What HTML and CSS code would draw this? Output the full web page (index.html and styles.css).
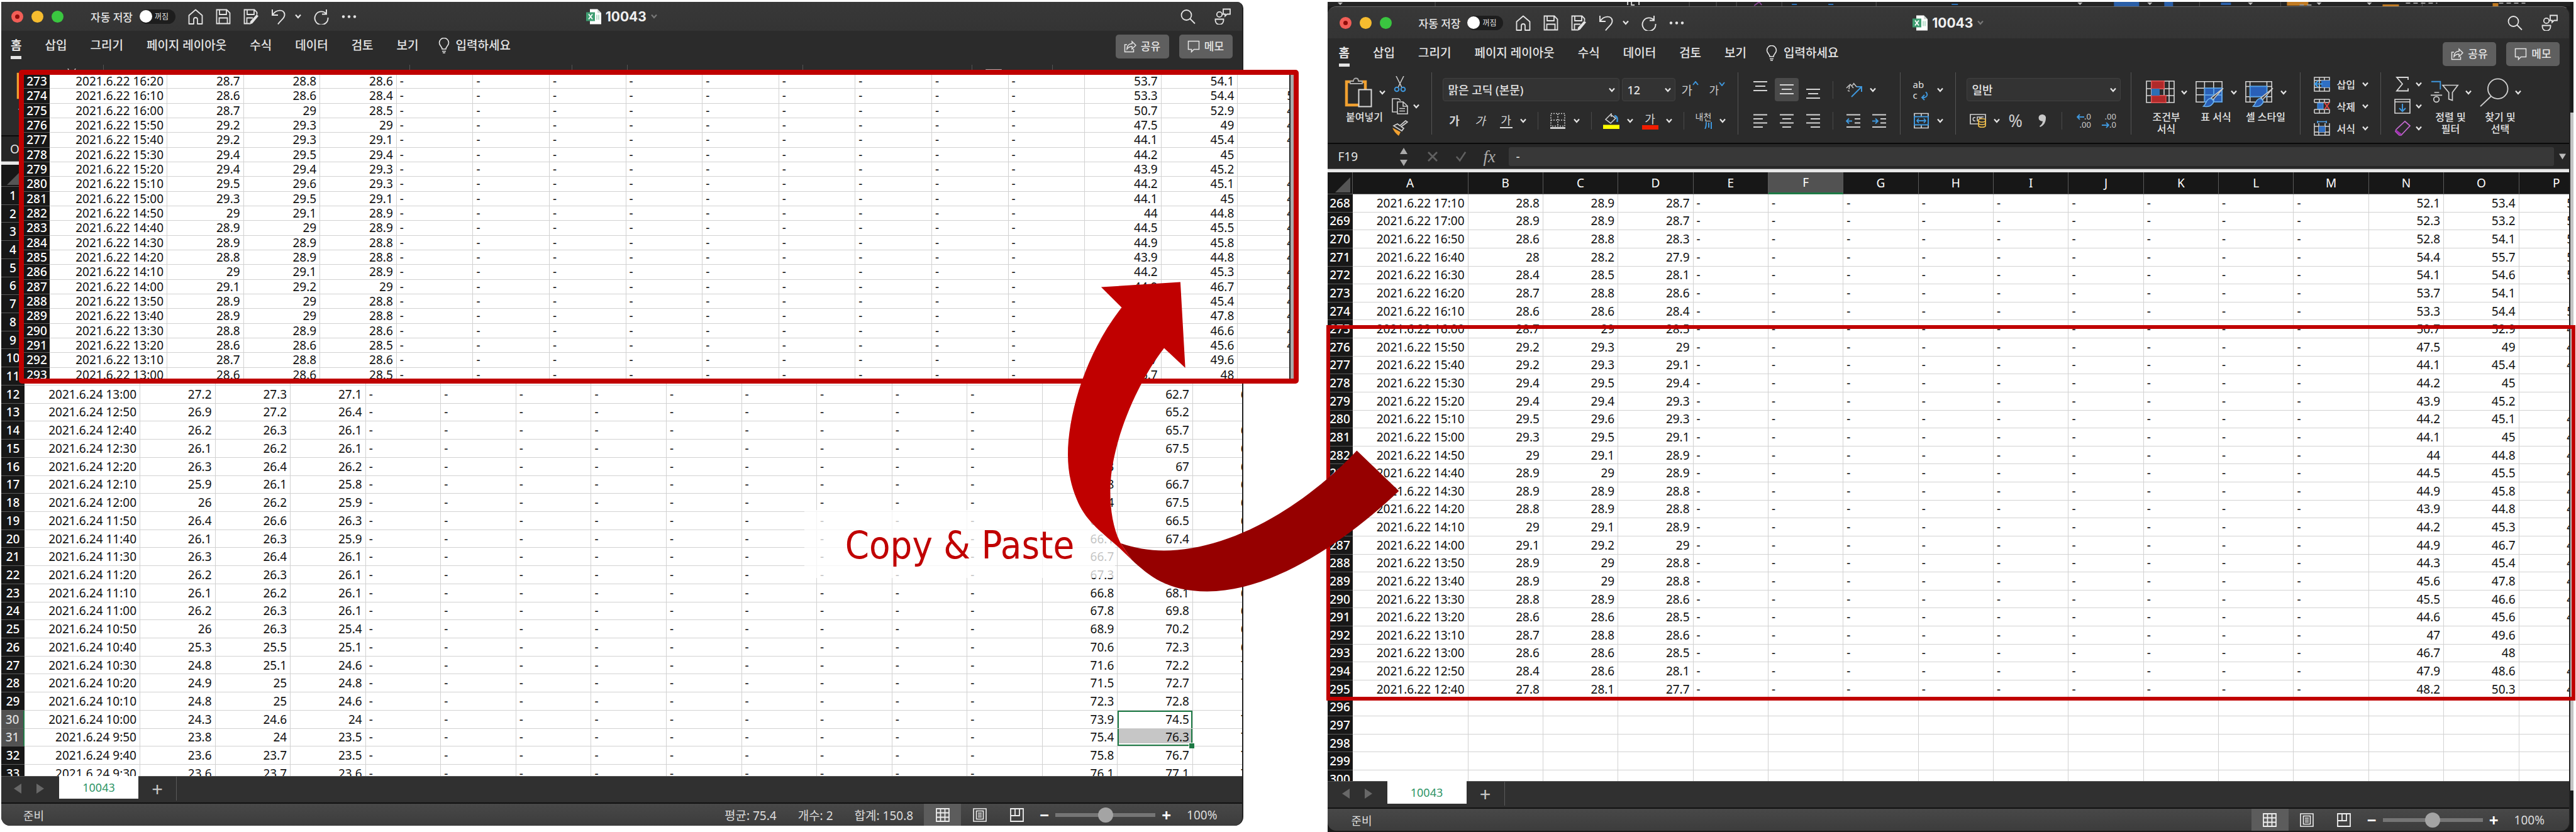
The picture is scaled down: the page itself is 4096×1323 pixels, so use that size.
FILE: index.html
```html
<!DOCTYPE html>
<html lang="ko">
<head>
<meta charset="utf-8">
<title>10043</title>
<link rel="stylesheet" href="styles.css">
</head>
<body>
<svg class="sprite" aria-hidden="true">
  <symbol id="chev" viewBox="0 0 10 8"><path d="M1 1.5l4 4.5 4-4.5" fill="none" stroke="currentColor" stroke-width="2.2"/></symbol>
  <symbol id="home" viewBox="0 0 24 25"><path d="M1.5 10.5L12 1.5l10.500 9V24H15v-7a3 3 0 0 0-6 0v7H1.500z" fill="none" stroke="currentColor" stroke-width="1.8" stroke-linejoin="round"/></symbol>
  <symbol id="save" viewBox="0 0 24 25"><path d="M1.500 1.500h16l5 5V23.500h-21zM6 1.500V9h11V1.500M5.500 23.500V14.500h13v9" fill="none" stroke="currentColor" stroke-width="1.8"/></symbol>
  <symbol id="saveas" viewBox="0 0 24 25"><path d="M10 23.500H1.500v-22h16l4 4V9M6 1.500V9h11V1.500M5.500 23.500V14.500H15" fill="none" stroke="currentColor" stroke-width="1.8"/><path d="M21 9l3 2.500L14.500 23l-4.500 2 1-5z" fill="currentColor"/></symbol>
  <symbol id="undo" viewBox="0 0 24 25"><path d="M2 1v9h9M2.500 9.500C8 1 20 0 21.500 8.500 22.500 15 15 18 11 24.500" fill="none" stroke="currentColor" stroke-width="1.9"/></symbol>
  <symbol id="redo" viewBox="0 0 24 25"><path d="M20 1v7.500h-7M20 8A10.500 10.500 0 1 0 22.500 14" fill="none" stroke="currentColor" stroke-width="1.9"/></symbol>
  <symbol id="dots" viewBox="0 0 24 6"><g fill="currentColor"><circle cx="3" cy="3" r="2.200"/><circle cx="12" cy="3" r="2.200"/><circle cx="21" cy="3" r="2.200"/></g></symbol>
  <symbol id="doc" viewBox="0 0 24 24"><path d="M6 0h12l6 6v18H6z" fill="#fff"/><path d="M18 0v6h6z" fill="#cfd8d3"/><rect y="5" width="14" height="14" fill="#3f9e72"/><path d="M4 8l6 8M10 8l-6 8" stroke="#fff" stroke-width="1.800"/><path d="M17 9v8M20 9v8" stroke="#9fd3ba" stroke-width="1.500"/></symbol>
  <symbol id="search" viewBox="0 0 24 24"><g fill="none" stroke="currentColor" stroke-width="1.800"><circle cx="9.500" cy="9.500" r="8"/><path d="M15 15l8 8"/></g></symbol>
  <symbol id="person" viewBox="0 0 26 26"><g fill="none" stroke="currentColor" stroke-width="1.800"><circle cx="8" cy="10" r="4.200"/><path d="M1.500 17.500h13v2a5.500 5.500 0 0 1-13 0zM14 1.500h11v8h-5l-3 3v-3h-3z"/></g></symbol>
  <symbol id="bulb" viewBox="0 0 18 25"><path d="M6 18c0-4-4.500-5-4.500-10a7.500 7.500 0 0 1 15 0c0 5-4.500 6-4.500 10zM6 21.500h6M7 24h4" fill="none" stroke="currentColor" stroke-width="1.600"/></symbol>
  <symbol id="share" viewBox="0 0 20 20"><path d="M5 7H1.500v11.500h14V14M5 14c0-6 4-8.500 8-8.500V2l6 6-6 6v-4c-4 0-6 1-8 4z" fill="none" stroke="currentColor" stroke-width="1.500"/></symbol>
  <symbol id="memo" viewBox="0 0 20 20"><path d="M1.500 1.500h17v13h-8l-4 4v-4h-5z" fill="none" stroke="currentColor" stroke-width="1.500"/></symbol>
  <symbol id="paste" viewBox="0 0 44 48"><path d="M3 7h30v37H3z" fill="none" stroke="#f0a030" stroke-width="4.500"/><path d="M9 10V6h5c0-6 8-6 8 0h6v4z" fill="#2b2b2b" stroke="#aaa" stroke-width="1.800"/><path d="M22.500 19.500h20v27h-20z" fill="#2b2b2b" stroke="#d8d8d8" stroke-width="2"/></symbol>
  <symbol id="cut" viewBox="0 0 26 26"><path d="M7 0l9 18M19 0l-9 18" stroke="#c8c8c8" stroke-width="1.600"/><g fill="none" stroke="#3f97dc" stroke-width="2"><circle cx="8" cy="21" r="3.300"/><circle cx="18" cy="21" r="3.300"/></g></symbol>
  <symbol id="copy" viewBox="0 0 26 26"><g fill="none" stroke="#d0d0d0" stroke-width="1.600"><path d="M9 22H1V1h10l3 3"/><path d="M9 6h9l7 6.500V25H9zM18 6v7h7M12 16.500h9M12 20.500h9"/></g></symbol>
  <symbol id="brush" viewBox="0 0 26 26"><path d="M1 12l13 7-3 6C6 21 3 17 1 12z" fill="#f0a030"/><path d="M3 9l13 8 3-4-4-2.500L25 3l-3-2-9 8-4-3z" fill="#2b2b2b" stroke="#d0d0d0" stroke-width="1.700"/></symbol>
  <symbol id="borders" viewBox="0 0 26 26"><path d="M2 1.500h22v20H2zM13 2v20M2 12h22" fill="none" stroke="#ccc" stroke-width="1.600" stroke-dasharray="2 2"/><path d="M1 24.500h24" stroke="#eee" stroke-width="2.400"/></symbol>
  <symbol id="fill" viewBox="0 0 26 26"><path d="M13 1v6M12 3L4 11l8 6 8-8z" fill="none" stroke="#ccc" stroke-width="1.600"/><path d="M18 5c5 1 5 5 4.500 10" fill="none" stroke="#3f97dc" stroke-width="2.500"/><path d="M0 19.500h26V26H0z" fill="#ff0"/></symbol>
  <symbol id="al-top" viewBox="0 0 24 38"><path d="M1 6h22M4 13h16M1 20h22" stroke="currentColor" stroke-width="1.800"/></symbol>
  <symbol id="al-mid" viewBox="0 0 24 38"><path d="M1 11h22M4 18h16M1 25h22" stroke="currentColor" stroke-width="1.800"/></symbol>
  <symbol id="al-bot" viewBox="0 0 24 38"><path d="M1 18h22M4 25h16M1 32h22" stroke="currentColor" stroke-width="1.800"/></symbol>
  <symbol id="al-l" viewBox="0 0 24 24"><path d="M1 2h22M1 8.500h15M1 15h22M1 21.500h15" stroke="currentColor" stroke-width="1.800"/></symbol>
  <symbol id="al-c" viewBox="0 0 24 24"><path d="M1 2h22M5 8.500h14M1 15h22M5 21.500h14" stroke="currentColor" stroke-width="1.800"/></symbol>
  <symbol id="al-r" viewBox="0 0 24 24"><path d="M1 2h22M8 8.500h15M1 15h22M8 21.500h15" stroke="currentColor" stroke-width="1.800"/></symbol>
  <symbol id="outdent" viewBox="0 0 24 24"><path d="M1 2h22M14 8.500h9M14 15h9M1 21.500h22" stroke="#d0d0d0" stroke-width="1.800"/><path d="M10 12H1M5 8l-4 4 4 4" fill="none" stroke="#3f97dc" stroke-width="1.900"/></symbol>
  <symbol id="indent" viewBox="0 0 24 24"><path d="M1 2h22M14 8.500h9M14 15h9M1 21.500h22" stroke="#d0d0d0" stroke-width="1.800"/><path d="M1 12h9M6 8l4 4-4 4" fill="none" stroke="#3f97dc" stroke-width="1.900"/></symbol>
  <symbol id="orient" viewBox="0 0 26 24"><path d="M9 23L24 8M17 7h8v8" fill="none" stroke="#3f97dc" stroke-width="2"/><path d="M1 9l5-5-1 7M7 3l5 6M12 1l5 6M10 5l3-3M3 13l3 1" fill="none" stroke="#c8c8c8" stroke-width="1.500"/></symbol>
  <symbol id="wraparrow" viewBox="0 0 12 14"><path d="M8 0c5 5 1 10-6 9M6 5L2 9l4 4" fill="none" stroke="#3f97dc" stroke-width="1.900"/></symbol>
  <symbol id="merge" viewBox="0 0 26 26"><path d="M2 1.500h22v23H2zM13 1v5M13 20v5" fill="none" stroke="#d0d0d0" stroke-width="1.700"/><path d="M2 6.500h22v13H2z" fill="#2b2b2b" stroke="#3f97dc" stroke-width="2"/><path d="M6 13h14M9 9.500L6 13l3 3.500M17 9.500l3 3.500-3 3.500" fill="none" stroke="#3f97dc" stroke-width="1.800"/></symbol>
  <symbol id="money" viewBox="0 0 26 22"><path d="M1 1h24v15H1z" fill="none" stroke="#d0d0d0" stroke-width="1.700"/><path d="M9 6c-5-2-5 7 0 5M12 12V5h4v7M18 12V5h4" fill="none" stroke="#d0d0d0" stroke-width="1.600"/><path d="M14 10c0-3 11-3 11 0v9c0 3-11 3-11 0z" fill="#2b2b2b" stroke="#f2c04c" stroke-width="1.700"/><path d="M14 11c1 3 10 3 11 0M14 15c1 3 10 3 11 0" fill="none" stroke="#f2c04c" stroke-width="1.600"/></symbol>
  <symbol id="thousands" viewBox="0 0 14 22"><path d="M7 1a5.500 5.500 0 0 1 6 6c0 7-4 12-9 14l-1-1.500c3-2 5-5 5-8A5.200 5.200 0 0 1 1.500 6.500 5.500 5.500 0 0 1 7 1z" fill="#c8c8c8"/></symbol>
  <symbol id="arr-l" viewBox="0 0 12 10"><path d="M12 5H1M5 1L1 5l4 4" fill="none" stroke="#3f97dc" stroke-width="1.900"/></symbol>
  <symbol id="arr-r" viewBox="0 0 12 10"><path d="M0 5h11M7 1l4 4-4 4" fill="none" stroke="#3f97dc" stroke-width="1.900"/></symbol>
  <symbol id="cond" viewBox="0 0 46 48"><path d="M1 6h44v34H1zM9 6v34M29 6v34M37 6v34M1 18h44M1 29h44" fill="none" stroke="#d8d8d8" stroke-width="1.600"/><path d="M9 6h20v12H9zM9 29h23v11H9z" fill="#b02a2a" stroke="#e04444" stroke-width="1.500"/><path d="M9 18h13v11H9z" fill="#2a6fb5"/></symbol>
  <symbol id="tfmt" viewBox="0 0 48 48"><path d="M15 17h30v23H15z" fill="#2960b8"/><path d="M1 6h43v34H1zM15 6v34M30 6v34M1 17h43M1 28h43" fill="none" stroke="#d8d8d8" stroke-width="1.600"/><path d="M15 17h29v23H15zM30 17v23M15 28h29" fill="none" stroke="#4ea0ea" stroke-width="1.500"/><path d="M46 17L29 36l-3-3z" fill="#333" stroke="#ccc" stroke-width="1.600"/><path d="M24 34c5 1 8 5 4 9-3 4-9 5-15 4 5-4 4-11 11-13z" fill="#2960b8" stroke="#6cb4f0" stroke-width="1.600"/></symbol>
  <symbol id="cstyle" viewBox="0 0 48 48"><path d="M1 6h43v34H1zM8 6v34M1 14h43M1 31h43M36 6v34" fill="none" stroke="#d8d8d8" stroke-width="1.600"/><path d="M8 14h28v17H8z" fill="#2960b8" stroke="#4ea0ea" stroke-width="1.800"/><path d="M46 17L29 36l-3-3z" fill="#333" stroke="#ccc" stroke-width="1.600"/><path d="M24 34c5 1 8 5 4 9-3 4-9 5-15 4 5-4 4-11 11-13z" fill="#2960b8" stroke="#6cb4f0" stroke-width="1.600"/></symbol>
  <symbol id="ins" viewBox="0 0 26 24"><path d="M1 1h24v22H1zM9 1v22M17 1v22M1 6h24M1 17h24" fill="none" stroke="#d8d8d8" stroke-width="1.500"/><path d="M12 6h14v11H12z" fill="#2f6fc4"/><path d="M14 11.500H2M7 6.500l-5 5 5 5" fill="none" stroke="#3fa0ee" stroke-width="2.200"/></symbol>
  <symbol id="del" viewBox="0 0 26 24"><path d="M1 1h24M1 23h24M1 1v5M1 17v6M9 1v5M9 17v6M17 1v5M17 17v6M25 1v5M25 17v6M1 6h24M1 17h24" fill="none" stroke="#d8d8d8" stroke-width="1.500"/><path d="M6 7h9v9H6z" fill="#2f6fc4" stroke="#4ea0ea"/><path d="M17 6l8 11M25 6l-8 11" stroke="#e04444" stroke-width="2"/></symbol>
  <symbol id="fmt" viewBox="0 0 26 24"><path d="M1 4v19h24V4M8 4v19M18 4v19M1 9h24M1 18h24" fill="none" stroke="#d8d8d8" stroke-width="1.500"/><path d="M8 9h10v9H8z" fill="#2f6fc4"/><path d="M6 1.500h14M6 0v4M20 0v4" stroke="#4ea0ea" stroke-width="1.700"/></symbol>
  <symbol id="sum" viewBox="0 0 26 24"><path d="M22 5V1H4l9 10.500L4 22.500h18v-4" fill="none" stroke="#d8d8d8" stroke-width="1.800"/></symbol>
  <symbol id="down" viewBox="0 0 26 24"><path d="M1 1h24v22H1zM1 5h24" fill="none" stroke="#d8d8d8" stroke-width="1.600"/><path d="M13 8v12M8 15l5 5 5-5" fill="none" stroke="#3f97dc" stroke-width="2"/></symbol>
  <symbol id="erase" viewBox="0 0 26 24"><path d="M3 14L17 1l8 7-14 15H8l-6-6z" fill="none" stroke="#c46ad0" stroke-width="1.700"/><path d="M3 14l9 7-2 2H8l-6-6z" fill="#a030b0"/></symbol>
  <symbol id="sort" viewBox="0 0 48 48"><path d="M2 6h15v13" fill="none" stroke="#3f97dc" stroke-width="2"/><path d="M21 12h25L37 24v13l-6-2V24z" fill="none" stroke="#d0d0d0" stroke-width="1.800"/><path d="M7 24h8M1 28.500h19" stroke="#d0d0d0" stroke-width="1.800"/><circle cx="10.500" cy="35.500" r="4.500" fill="none" stroke="#d0d0d0" stroke-width="1.800"/></symbol>
  <symbol id="find" viewBox="0 0 48 48"><g fill="none" stroke="#d0d0d0" stroke-width="1.900"><circle cx="30" cy="18" r="16.500"/><path d="M19 30L1 47"/></g></symbol>
  <symbol id="v-grid" viewBox="0 0 22 22"><path d="M1 1h20v20H1zM7.500 1v20M14.500 1v20M1 7.500h20M1 14.500h20" fill="none" stroke="currentColor" stroke-width="1.800"/></symbol>
  <symbol id="v-page" viewBox="0 0 22 22"><path d="M1 1h20v20H1zM5.500 4.500h11v13h-11zM8 8h6M8 11h6M8 14h6" fill="none" stroke="currentColor" stroke-width="1.600"/></symbol>
  <symbol id="v-break" viewBox="0 0 22 22"><path d="M1 1h20v20H1zM8 1v11h7V1M1 12h7" fill="none" stroke="currentColor" stroke-width="1.800"/></symbol>
  <symbol id="tri-u" viewBox="0 0 12 10"><path d="M6 0l6 10H0z" fill="currentColor"/></symbol>
  <symbol id="tri-d" viewBox="0 0 12 10"><path d="M0 0h12L6 10z" fill="currentColor"/></symbol>
  <symbol id="tri-l" viewBox="0 0 12 16"><path d="M12 0v16L0 8z" fill="currentColor"/></symbol>
  <symbol id="tri-r" viewBox="0 0 12 16"><path d="M0 0v16l12-8z" fill="currentColor"/></symbol>
  <symbol id="corner" viewBox="0 0 24 24"><path d="M24 0v24H0z" fill="#555"/></symbol>
  <symbol id="no" viewBox="0 0 18 18"><path d="M2 2l14 14M16 2L2 16" stroke="currentColor" stroke-width="2.800"/></symbol>
  <symbol id="ok" viewBox="0 0 20 18"><path d="M2 9l6 7L18 1" fill="none" stroke="currentColor" stroke-width="2.800"/></symbol>
</svg>

<main class="board">
  <section class="window window-left" aria-label="10043">
    <header class="titlebar">
      <div class="tools">
        <span class="lights"><i class="red"></i><i class="amber"></i><i class="green"></i></span>
        <span class="autosave">자동 저장</span>
        <button class="switch" role="switch" aria-checked="false" aria-label="자동 저장"><i></i>꺼짐</button>
        <button aria-label="홈"><svg class="i24"><use href="#home"/></svg></button>
        <button aria-label="저장"><svg class="i24"><use href="#save"/></svg></button>
        <button aria-label="다른 이름으로 저장"><svg class="i24"><use href="#saveas"/></svg></button>
        <button class="split" aria-label="실행 취소"><svg class="i24"><use href="#undo"/></svg><svg class="chev"><use href="#chev"/></svg></button>
        <button aria-label="다시 실행"><svg class="i24"><use href="#redo"/></svg></button>
        <button aria-label="더 보기"><svg class="i24"><use href="#dots"/></svg></button>
      </div>
      <h1 class="doc"><svg class="i24"><use href="#doc"/></svg>10043<svg class="chev dim"><use href="#chev"/></svg></h1>
      <div class="corner-tools">
        <button aria-label="검색"><svg class="i24"><use href="#search"/></svg></button>
        <button aria-label="계정"><svg class="i26"><use href="#person"/></svg></button>
      </div>
    </header>
    <nav class="tabs">
      <a href="#" class="on">홈</a><a href="#">삽입</a><a href="#">그리기</a><a href="#">페이지 레이아웃</a><a href="#">수식</a><a href="#">데이터</a><a href="#">검토</a><a href="#">보기</a><a href="#" class="tell"><svg class="bulb"><use href="#bulb"/></svg>입력하세요</a>
      <span class="actions">
        <button class="pill"><svg class="i20"><use href="#share"/></svg>공유</button>
        <button class="pill"><svg class="i20"><use href="#memo"/></svg>메모</button>
      </span>
    </nav>
    <div class="ribbon">
      <div class="group g-clip">
        <button class="big"><span class="split"><svg class="i48"><use href="#paste"/></svg><svg class="chev"><use href="#chev"/></svg></span>붙여넣기</button>
        <div class="stack">
          <button aria-label="잘라내기"><svg class="i26"><use href="#cut"/></svg></button>
          <button aria-label="복사"><svg class="i26"><use href="#copy"/></svg></button>
          <button aria-label="서식 복사"><svg class="i26"><use href="#brush"/></svg></button>
        </div>
      </div>
      <div class="group g-font"></div><div class="group g-align"></div><div class="group g-wrap"></div><div class="group g-number"></div><div class="group g-styles"></div>
      <div class="group g-cells"><svg class="i26"><use href="#ins"/></svg></div>
      <div class="group g-edit"><svg class="i26"><use href="#sum"/></svg></div>
    </div>
    <div class="formula">
      <input class="name" aria-label="이름 상자" value="O30">
      <input class="fx-input" aria-label="수식 입력줄" value="74.5">
    </div>
    <div class="sheet"><table class="grid" id="sheet-top"></table></div>
    <div class="sheettabs">
      <button aria-label="이전 시트"><svg class="arrow"><use href="#tri-l"/></svg></button>
      <button aria-label="다음 시트"><svg class="arrow"><use href="#tri-r"/></svg></button>
      <a href="#" class="sheettab">10043</a>
      <button class="add" aria-label="시트 추가">+</button>
    </div>
    <footer class="status">
      <span class="ready">준비</span>
      <span class="stats"><span>평균: 75.4</span><span>개수: 2</span><span>합계: 150.8</span></span>
      <span class="views">
        <button class="on" aria-label="기본"><svg class="i22"><use href="#v-grid"/></svg></button>
        <button aria-label="페이지 레이아웃"><svg class="i22"><use href="#v-page"/></svg></button>
        <button aria-label="페이지 나누기"><svg class="i22"><use href="#v-break"/></svg></button>
      </span>
      <button class="zoom-btn" aria-label="축소">−</button>
      <input type="range" aria-label="확대/축소" min="0" max="200" value="100">
      <button class="zoom-btn" aria-label="확대">+</button>
      <span class="percent">100%</span>
    </footer>
  </section>

  <div class="behind">
    <svg class="sliver" viewBox="0 0 1976 7" preserveAspectRatio="none" aria-hidden="true">
      <path d="M171 0v7M575 0v7M618 0v7M650 0v7M722 0v7M872 0v7M1270 0v7M1386 0v7M1515 0v7M1740 0v7" stroke="#555" stroke-width="1"/>
      <path d="M16 1h8l-4 4zM1192 1h8l-4 4zM1303 1h8l-4 4zM1463 1h8l-4 4zM1572 1h8l-4 4zM1652 1h8l-4 4z" fill="#bbb"/>
      <path d="M477 0v5M483 0v5h5M495 0v5" stroke="#ccc" stroke-width="2" fill="none"/>
      <path d="M678 6l8-6 4 5" stroke="#84448e" stroke-width="2" fill="none"/>
      <path d="M738 4h8M796 4h8M992 4h10" stroke="#2a6fb5" stroke-width="2"/>
      <path d="M1250 0h40v7h-40zM1330 0h14v7h-14zM1420 1h16v4h-16z" fill="#2a5fa8"/>
      <path d="M1525 0h34v6h-34zM1677 4h26v3h-26zM1852 2h9v5h-9z" fill="#c07a22"/>
      <path d="M1714 2h50M1545 5h20M1862 2h42" stroke="#999" stroke-width="2" stroke-dasharray="7 5"/>
    </svg>
    <section class="window window-right" aria-label="10043">
      <header class="titlebar">
        <div class="tools">
          <span class="lights"><i class="red"></i><i class="amber"></i><i class="green"></i></span>
          <span class="autosave">자동 저장</span>
          <button class="switch" role="switch" aria-checked="false" aria-label="자동 저장"><i></i>꺼짐</button>
          <button aria-label="홈"><svg class="i24"><use href="#home"/></svg></button>
          <button aria-label="저장"><svg class="i24"><use href="#save"/></svg></button>
          <button aria-label="다른 이름으로 저장"><svg class="i24"><use href="#saveas"/></svg></button>
          <button class="split" aria-label="실행 취소"><svg class="i24"><use href="#undo"/></svg><svg class="chev"><use href="#chev"/></svg></button>
          <button aria-label="다시 실행"><svg class="i24"><use href="#redo"/></svg></button>
          <button aria-label="더 보기"><svg class="i24"><use href="#dots"/></svg></button>
        </div>
        <h2 class="doc"><svg class="i24"><use href="#doc"/></svg>10043<svg class="chev dim"><use href="#chev"/></svg></h2>
        <div class="corner-tools">
          <button aria-label="검색"><svg class="i24"><use href="#search"/></svg></button>
          <button aria-label="계정"><svg class="i26"><use href="#person"/></svg></button>
        </div>
      </header>
      <nav class="tabs">
        <a href="#" class="on">홈</a><a href="#">삽입</a><a href="#">그리기</a><a href="#">페이지 레이아웃</a><a href="#">수식</a><a href="#">데이터</a><a href="#">검토</a><a href="#">보기</a><a href="#" class="tell"><svg class="bulb"><use href="#bulb"/></svg>입력하세요</a>
        <span class="actions">
          <button class="pill"><svg class="i20"><use href="#share"/></svg>공유</button>
          <button class="pill"><svg class="i20"><use href="#memo"/></svg>메모</button>
        </span>
      </nav>
      <div class="ribbon">
        <div class="group g-clip">
          <button class="big"><span class="split"><svg class="i48"><use href="#paste"/></svg><svg class="chev"><use href="#chev"/></svg></span>붙여넣기</button>
          <div class="stack">
            <button aria-label="잘라내기"><svg class="i26"><use href="#cut"/></svg></button>
            <button class="split tight" aria-label="복사"><svg class="i26"><use href="#copy"/></svg><svg class="chev"><use href="#chev"/></svg></button>
            <button aria-label="서식 복사"><svg class="i26"><use href="#brush"/></svg></button>
          </div>
        </div>
        <div class="group g-font">
          <div class="line">
            <span class="combo wide"><select aria-label="글꼴"><option>맑은 고딕 (본문)</option></select><svg class="chev"><use href="#chev"/></svg></span>
            <span class="combo narrow"><select aria-label="글꼴 크기"><option>12</option></select><svg class="chev"><use href="#chev"/></svg></span>
            <button class="grow" aria-label="글꼴 크기 크게">가<svg class="caret"><path d="M1 6l4-5 4 5"/></svg></button>
            <button class="grow small" aria-label="글꼴 크기 작게">가<svg class="caret"><path d="M1 1l4 5 4-5"/></svg></button>
          </div>
          <div class="line second">
            <button class="glyph bold">가</button>
            <button class="glyph italic">가</button>
            <button class="split"><span class="glyph under">가</span><svg class="chev"><use href="#chev"/></svg></button>
            <i class="vr"></i>
            <button class="split" aria-label="테두리"><svg class="i26"><use href="#borders"/></svg><svg class="chev"><use href="#chev"/></svg></button>
            <i class="vr"></i>
            <button class="split" aria-label="채우기 색"><svg class="i26"><use href="#fill"/></svg><svg class="chev"><use href="#chev"/></svg></button>
            <button class="split fontcolor"><span class="glyph ink">가</span><svg class="chev"><use href="#chev"/></svg></button>
            <i class="vr"></i>
            <button class="split"><span class="glyph ruby">내천<svg><path d="M3 1c0 5 0 8-2 11M7 2v8M11 1v11"/></svg></span><svg class="chev"><use href="#chev"/></svg></button>
          </div>
        </div>
        <div class="group g-align">
          <div class="line">
            <button class="cell" aria-label="위쪽 맞춤"><svg class="i38"><use href="#al-top"/></svg></button>
            <button class="cell on" aria-label="가운데 맞춤"><svg class="i38"><use href="#al-mid"/></svg></button>
            <button class="cell" aria-label="아래쪽 맞춤"><svg class="i38"><use href="#al-bot"/></svg></button>
            <i class="vr"></i>
            <button class="split" aria-label="방향"><svg class="i26"><use href="#orient"/></svg><svg class="chev"><use href="#chev"/></svg></button>
          </div>
          <div class="line second">
            <button class="cell" aria-label="왼쪽 맞춤"><svg class="i24"><use href="#al-l"/></svg></button>
            <button class="cell" aria-label="가운데 맞춤"><svg class="i24"><use href="#al-c"/></svg></button>
            <button class="cell" aria-label="오른쪽 맞춤"><svg class="i24"><use href="#al-r"/></svg></button>
            <i class="vr"></i>
            <button aria-label="내어쓰기"><svg class="i24"><use href="#outdent"/></svg></button>
            <button class="next" aria-label="들여쓰기"><svg class="i24"><use href="#indent"/></svg></button>
          </div>
        </div>
        <div class="group g-wrap">
          <div class="line"><button class="split"><span class="wrap-ico">ab<br>c<svg><use href="#wraparrow"/></svg></span><svg class="chev"><use href="#chev"/></svg></button></div>
          <div class="line second"><button class="split" aria-label="병합"><svg class="i26"><use href="#merge"/></svg><svg class="chev"><use href="#chev"/></svg></button></div>
        </div>
        <div class="group g-number">
          <div class="line"><span class="combo format"><select aria-label="표시 형식"><option>일반</option></select><svg class="chev"><use href="#chev"/></svg></span></div>
          <div class="line second">
            <button class="split" aria-label="통화"><svg class="i26"><use href="#money"/></svg><svg class="chev"><use href="#chev"/></svg></button>
            <button class="sym">%</button>
            <button class="comma" aria-label="쉼표 스타일"><svg><use href="#thousands"/></svg></button>
            <i class="vr"></i>
            <button class="dec"><span><svg><use href="#arr-l"/></svg>.0</span><span>.00</span></button>
            <button class="dec"><span>.00</span><span><svg><use href="#arr-r"/></svg>.0</span></button>
          </div>
        </div>
        <div class="group g-styles">
          <button class="big"><span class="split"><svg class="i48"><use href="#cond"/></svg><svg class="chev"><use href="#chev"/></svg></span>조건부<br>서식</button>
          <button class="big"><span class="split"><svg class="i48"><use href="#tfmt"/></svg><svg class="chev"><use href="#chev"/></svg></span>표 서식</button>
          <button class="big"><span class="split"><svg class="i48"><use href="#cstyle"/></svg><svg class="chev"><use href="#chev"/></svg></span>셀 스타일</button>
        </div>
        <div class="group g-cells">
          <div class="stack">
            <button class="split"><svg class="i26"><use href="#ins"/></svg>삽입<svg class="chev"><use href="#chev"/></svg></button>
            <button class="split"><svg class="i26"><use href="#del"/></svg>삭제<svg class="chev"><use href="#chev"/></svg></button>
            <button class="split"><svg class="i26"><use href="#fmt"/></svg>서식<svg class="chev"><use href="#chev"/></svg></button>
          </div>
        </div>
        <div class="group g-edit">
          <div class="stack">
            <button class="split tight" aria-label="합계"><svg class="i26"><use href="#sum"/></svg><svg class="chev"><use href="#chev"/></svg></button>
            <button class="split tight" aria-label="채우기"><svg class="i26"><use href="#down"/></svg><svg class="chev"><use href="#chev"/></svg></button>
            <button class="split tight" aria-label="지우기"><svg class="i26"><use href="#erase"/></svg><svg class="chev"><use href="#chev"/></svg></button>
          </div>
          <button class="big"><span class="split"><svg class="i48"><use href="#sort"/></svg><svg class="chev"><use href="#chev"/></svg></span>정렬 및<br>필터</button>
          <button class="big"><span class="split"><svg class="i48"><use href="#find"/></svg><svg class="chev"><use href="#chev"/></svg></span>찾기 및<br>선택</button>
        </div>
      </div>
      <div class="formula">
        <input class="name" aria-label="이름 상자" value="F19">
        <span class="spin"><svg><use href="#tri-u"/></svg><svg><use href="#tri-d"/></svg></span>
        <span class="fx"><svg class="i18"><use href="#no"/></svg><svg class="i18"><use href="#ok"/></svg><em>fx</em></span>
        <input class="fx-input" aria-label="수식 입력줄" value="-">
        <svg class="expand"><use href="#tri-d"/></svg>
      </div>
      <div class="sheet"><table class="grid" id="sheet-bottom"></table></div>
      <div class="sheettabs">
        <button aria-label="이전 시트"><svg class="arrow"><use href="#tri-l"/></svg></button>
        <button aria-label="다음 시트"><svg class="arrow"><use href="#tri-r"/></svg></button>
        <a href="#" class="sheettab">10043</a>
        <button class="add" aria-label="시트 추가">+</button>
      </div>
      <footer class="status">
        <span class="ready">준비</span>
        <span class="views">
          <button class="on" aria-label="기본"><svg class="i22"><use href="#v-grid"/></svg></button>
          <button aria-label="페이지 레이아웃"><svg class="i22"><use href="#v-page"/></svg></button>
          <button aria-label="페이지 나누기"><svg class="i22"><use href="#v-break"/></svg></button>
        </span>
        <button class="zoom-btn" aria-label="축소">−</button>
        <input type="range" aria-label="확대/축소" min="0" max="200" value="100">
        <button class="zoom-btn" aria-label="확대">+</button>
        <span class="percent">100%</span>
      </footer>
    </section>
  </div>

  <div class="clip"><table class="grid" id="sheet-clip"></table></div>
  <div class="target"></div>
  <p class="caption">Copy &amp; Paste</p>
  <svg class="arrow-over" viewBox="0 0 4225 1365" aria-hidden="true">
    <path fill="#960000" d="M1838 891C1860 899 1885 903 1909 903 2010 903 2130 840 2225.400 739L2294.400 805.300C2210 885 2090 970 1980 970 1915 970 1885 945 1856 918z"/>
    <path fill="#c00000" d="M1806 471L1936 462.500 1944 603.500 1909.300 571C1865 628 1821 728 1821 806 1821 840 1827 870 1838 891L1856 918 1833 896C1803 870 1779 852 1766 819 1756 795 1751.500 772 1751.500 746 1751.500 680 1780 580 1839.700 504.400z"/>
  </svg>
</main>
<script src="sheets.js"></script>
</body>
</html>
```

FILE: styles.css
```css
* { box-sizing: border-box; }
body {
  margin: 0;
  background: #fff;
  font-family: "Noto Sans", "Noto Sans CJK KR", sans-serif;
  font-size: 19px;
  color: #111;
}
button, select, input { font: inherit; color: inherit; border: 0; background: none; padding: 0; margin: 0; }
button { display: inline-flex; align-items: center; justify-content: center; }
a { color: inherit; text-decoration: none; }
svg { display: block; flex: none; }
.sprite { position: absolute; width: 0; height: 0; }
.i18 { width: 18px; height: 18px; }
.i20 { width: 20px; height: 20px; }
.i22 { width: 22px; height: 22px; }
.i24 { width: 24px; height: 25px; }
.i26 { width: 26px; height: 26px; }
.i38 { width: 24px; height: 38px; }
.i48 { width: 46px; height: 48px; }
.chev { width: 10px; height: 8px; }
.dim { color: #777; }
.split { display: inline-flex; align-items: center; gap: 12px; }
.tight { gap: 8px; }

.board {
  position: relative;
  display: flex;
  gap: 134px;
  height: 100vh;
  min-height: 900px;
  padding: 3px 4px 0 2px;
  overflow: hidden;
}
.window {
  --edge: 18px;
  --head: 40px;
  display: flex;
  flex-direction: column;
  min-width: 0;
  overflow: hidden;
  background: #2b2b2b;
  color: #e4e4e4;
}
.window-left {
  --edge: 15px;
  --head: 37px;
  flex: 1976 1 0;
  margin-bottom: 10px;
  border-right: 2px solid #222;
  border-radius: 0 10px 14px 14px;
}
.behind {
  flex: 1980 1 0;
  min-width: 0;
  display: flex;
  flex-direction: column;
  padding-right: 5px;
  padding-bottom: 2px;
  background: linear-gradient(#1c1c1c 0 176px, #c4c4c4 176px 1254px, #1a1a1a 1254px);
}
.sliver { width: 100%; height: 7px; background: #242424; }
.window-right { flex: 1; border-radius: 14px; border-top: 1px solid #666; border-right: 2px solid #222; }

.titlebar {
  display: grid;
  grid-template-columns: 1fr auto 1fr;
  align-items: center;
  flex: none;
  height: 46px;
  background: linear-gradient(#383838, #343434);
}
.window-right .titlebar { height: 50px; }
.tools { display: flex; align-items: center; gap: 20px; padding-left: calc(var(--edge) + 1px); }
.tools .split { gap: 14px; }
.lights { display: flex; gap: 13px; margin-right: 23px; }
.lights i { display: grid; place-items: center; width: 19px; height: 19px; border-radius: 50%; }
.red { background: #f25e57; }
.red::after { content: ""; width: 7px; height: 7px; border-radius: 50%; background: #8f0d0a; }
.amber { background: #f6bc2f; }
.green { background: #3ac640; }
.autosave { font-size: 17px; font-weight: 500; margin-right: -9px; }
.switch { width: 57px; height: 23px; border-radius: 12px; background: #1d1d1d; font-size: 12px; justify-content: flex-start; gap: 4px; }
.switch i { width: 20px; height: 20px; border-radius: 50%; background: #fff; }
.doc { display: flex; align-items: center; gap: 7px; margin: 0; font: 700 21px Inter, sans-serif; color: #f0f0f0; }
.corner-tools { display: flex; justify-content: flex-end; gap: 30px; padding-right: 18px; }

.tabs { display: flex; align-items: flex-start; gap: 37px; flex: none; height: 50px; padding: 9px 15px 0 var(--edge); line-height: 28px; font-weight: 500; }
.tabs .on { font-weight: 700; border-bottom: 5px solid #e4e4e4; height: 36px; }
.tell { display: flex; align-items: center; gap: 10px; margin-left: -6px; }
.bulb { width: 18px; height: 25px; }
.actions { display: flex; gap: 16px; margin: -3px 0 0 auto; }
.pill { gap: 7px; width: 85px; height: 38px; border-radius: 5px; background: #5f5f5f; font-size: 17px; font-weight: 500; }

.ribbon { display: flex; flex: none; height: 116px; padding: 4px 0 13px; font-size: 16px; font-weight: 500; }
.group { flex: none; border-right: 1px solid #545454; }
.g-clip { width: 166px; display: flex; gap: 10px; padding: 8px 0 0 26px; }
.window-left .g-clip { width: 163px; padding-left: 23px; }
.g-font { width: 487px; padding: 9px 0 0 17px; }
.g-align { width: 258px; padding: 9px 0 0 16px; }
.g-wrap { width: 88px; padding: 9px 0 0 20px; }
.g-number { width: 279px; padding: 9px 0 0 17px; }
.g-styles { width: 269px; padding: 8px 0 0 23px; display: flex; gap: 13px; }
.g-cells { width: 128px; padding: 6px 0 0 21px; }
.g-edit { flex: 1; padding: 8px 0 0 21px; display: flex; gap: 13px; border: 0; }
.big { display: flex; flex-direction: column; align-items: center; justify-content: flex-start; width: 66px; line-height: 19px; white-space: nowrap; }
.big .split { gap: 10px; margin-bottom: 6px; }
.stack { display: flex; flex-direction: column; align-items: flex-start; gap: 9px; }
.g-clip .stack, .g-edit .stack { margin-top: -2px; }
.stack .split { height: 26px; }
.g-cells .split { gap: 11px; }
.line { display: flex; align-items: center; height: 37px; }
.second { height: 26px; margin-top: 18px; }
.combo { display: grid; align-items: center; height: 37px; border: 1px solid #404040; border-radius: 4px; background: #333; font-size: 18px; }
.combo > * { grid-area: 1 / 1; }
.combo select { appearance: none; width: 100%; padding-left: 8px; }
.combo .chev { justify-self: end; margin-right: 6px; }
.wide { width: 281px; margin-right: 4px; }
.narrow { width: 85px; margin-right: 10px; }
.format { width: 245px; }
.grow { width: 26px; font-size: 19px; font-weight: 400; align-items: flex-start; justify-content: flex-start; margin-right: 18px; color: #ccc; }
.grow.small { font-size: 17px; margin-right: 0; }
.caret { width: 10px; height: 7px; fill: none; stroke: #3f97dc; stroke-width: 2; }
.glyph { display: inline-flex; justify-content: center; width: 20px; font-size: 18px; font-weight: 400; line-height: 22px; color: #d4d4d4; }
.g-font .second { padding-left: 9px; }
.g-font .second > .glyph { margin-right: 21px; }
.glyph.bold { font-weight: 700; }
.italic { font-style: italic; }
.under { border-bottom: 2px solid #d4d4d4; }
.ink { width: 26px; line-height: 20px; border-bottom: 7px solid #f21d00; }
.ruby { position: relative; width: 26px; font-size: 14px; height: 26px; line-height: 14px; }
.ruby svg { position: absolute; right: 0; bottom: 0; width: 12px; height: 12px; fill: none; stroke: #3f97dc; stroke-width: 2; }
.fontcolor { margin-left: 14px; }
.vr { width: 1px; height: 28px; margin: 0 18px; background: #4a4a4a; }
.cell { width: 38px; height: 37px; margin-right: 4px; border-radius: 4px; color: #d4d4d4; }
.cell.on { background: #4a4a4a; }
.g-align .vr { margin: 0 20px 0 8px; }
.next { margin-left: 17px; }
.wrap-ico { position: relative; display: block; width: 26px; font-size: 15px; font-weight: 400; line-height: 17px; text-align: left; }
.wrap-ico svg { position: absolute; right: 2px; bottom: 0; width: 12px; height: 14px; }
.g-number .second { padding-left: 5px; }
.sym { margin-left: 14px; font-size: 27px; font-weight: 400; line-height: 26px; color: #ccc; }
.comma { margin-left: 24px; }
.comma svg { width: 14px; height: 22px; }
.g-number .vr { margin: 0 20px 0 24px; }
.dec { display: flex; flex-direction: column; align-items: flex-end; width: 26px; margin-right: 14px; font-size: 13px; font-weight: 400; line-height: 13px; color: #ccc; }
.dec span { display: flex; align-items: center; }
.dec svg { width: 12px; height: 10px; }

.formula { display: flex; align-items: center; flex: none; height: 47px; border-top: 2px solid #0a0a0a; border-bottom: 5px solid #e8e8e8; box-shadow: inset 0 -1px #666; background: #262626; }
.name { width: 110px; padding-left: calc(var(--edge) - 1px); }
.spin { display: grid; gap: 9px; width: 26px; padding-left: 5px; margin-right: 22px; color: #aaa; }
.spin svg { width: 12px; height: 10px; }
.fx { display: flex; align-items: center; width: 130px; gap: 27px; color: #606060; }
.fx em { font: italic 27px "Liberation Serif", serif; color: #aaa; }
.fx-input { flex: 1; min-width: 0; height: 30px; padding-left: 12px; border-radius: 3px; background: #383838; }
.expand { width: 11px; height: 10px; margin: 0 5px 0 8px; color: #bbb; }

.sheet { flex: 1; min-height: 0; overflow: hidden; background: #fff; color: #111; }
.grid { table-layout: fixed; border-collapse: separate; border-spacing: 0; line-height: 22px; }
#sheet-top { width: calc(100% + 42px); height: 983px; }
#sheet-bottom { width: calc(100% + 40px); height: 980px; }
.col-head { width: var(--head); }
.col-a { width: 184px; }
.grid th { padding: 0; font-weight: 400; color: #fff; background: #171717; border-right: 1px solid #5a5a5a; border-bottom: 1px solid #5a5a5a; overflow: hidden; }
.grid thead th { height: 35px; }
.grid thead th.sel { background: #525252; border-bottom: 3px solid #1d7a45; }
.grid thead svg { width: 24px; height: 24px; margin: 6px 3px 0 auto; }
.grid tbody th { border-right: 0; font-weight: 500; }
.grid tbody th.sel { background: #525252; border-right: 2px solid #1d7a45; color: #ddd; }
.grid td { padding: 0 5px; text-align: right; white-space: nowrap; border-right: 1px solid #d2d2d2; border-bottom: 1px solid #d2d2d2; }
.grid td.dash { text-align: left; }
.grid td.pick { box-shadow: inset 2px 2px #1d7a45, inset -2px 0 #1d7a45; }
.grid td.pick-end { position: relative; background: #c6c6c6; box-shadow: inset 2px 0 #1d7a45, inset -2px -2px #1d7a45, inset 0 -4px #fff; }
.pick-end::after { content: ""; position: absolute; right: -3px; bottom: -4px; width: 8px; height: 8px; border: 1px solid #fff; border-width: 1px 0 0 1px; background: #1d7a45; }

.sheettabs { display: flex; align-items: flex-start; flex: none; height: 42px; padding-left: calc(var(--edge) + 5px); background: #303030; border-top: 1px solid #555; color: #686868; }
.sheettabs button { height: 38px; }
.arrow { width: 12px; height: 16px; margin-right: 24px; }
.sheettab { width: 126px; height: 36px; margin-top: -1px; line-height: 37px; font-size: 18px; text-align: center; background: #fff; color: #2f9566; }
.sheettabs .add { width: 61px; border-right: 1px solid #5a5a5a; font-size: 31px; color: #c8c8c8; }

.status { display: flex; align-items: center; flex: none; height: 37px; padding: 0 39px 0 calc(var(--edge) + 20px); border-top: 2px solid #111; background: linear-gradient(#484848, #3c3c3c); font-size: 18px; color: #dcdcdc; }
.ready { margin-right: auto; }
.stats { display: flex; gap: 34px; margin-right: 17px; font-size: 19px; }
.views { display: flex; align-self: stretch; margin-right: 6px; color: #eee; }
.views button { width: 59px; }
.views .on { background: #5c5c5c; }
.zoom-btn { width: 17px; font-size: 26px; font-weight: 700; line-height: 26px; color: #fff; }
.status input { appearance: none; width: 159px; height: 25px; margin: 0 9px; background: linear-gradient(#757575, #757575) center / 100% 6px no-repeat; }
.status input::-webkit-slider-thumb { appearance: none; width: 24px; height: 24px; border-radius: 50%; background: #a4a4a4; }
.percent { margin-left: 24px; font-size: 19px; }

.clip {
  --head: 41px;
  position: absolute;
  left: 30px;
  top: 111px;
  width: 2035px;
  height: 499px;
  border: 8px solid #c00000;
  border-radius: 5px;
  overflow: hidden;
  background: #fff;
}
.clip::after { content: ""; position: absolute; top: 0; right: 0; width: 5px; height: 100%; background: #aaa; border-left: 2px solid #222; }
#sheet-clip { width: 2052px; height: 490px; margin-top: -1px; line-height: 20px; }
.clip .col-a { width: 187px; }
.target { position: absolute; left: 2109px; top: 517px; right: 1px; height: 597px; border: 6px solid #c00000; }
.caption {
  position: absolute;
  left: 1279px;
  top: 811px;
  width: 494px;
  height: 108px;
  margin: 0;
  font: 61px/112px "DejaVu Sans Condensed", "Noto Sans", sans-serif;
  text-align: center;
  white-space: nowrap;
  color: #c00000;
  background: rgba(255, 255, 255, .75);
}
.arrow-over { position: absolute; left: 0; top: 0; width: 100%; height: auto; pointer-events: none; }
```

FILE: sheets.js
```js
// Readings: row number, date, B, C, D, N, O, P
const older = `268|2021.6.22 17:10|28.8|28.9|28.7|52.1|53.4|52.6
269|2021.6.22 17:00|28.9|28.9|28.7|52.3|53.2|52.4
270|2021.6.22 16:50|28.6|28.8|28.3|52.8|54.1|53.2
271|2021.6.22 16:40|28|28.2|27.9|54.4|55.7|54.3
272|2021.6.22 16:30|28.4|28.5|28.1|54.1|54.6|53.5
273|2021.6.22 16:20|28.7|28.8|28.6|53.7|54.1|53
274|2021.6.22 16:10|28.6|28.6|28.4|53.3|54.4|52.9
275|2021.6.22 16:00|28.7|29|28.5|50.7|52.9|49.8
276|2021.6.22 15:50|29.2|29.3|29|47.5|49|46.1
277|2021.6.22 15:40|29.2|29.3|29.1|44.1|45.4|43.8
278|2021.6.22 15:30|29.4|29.5|29.4|44.2|45|44
279|2021.6.22 15:20|29.4|29.4|29.3|43.9|45.2|44
280|2021.6.22 15:10|29.5|29.6|29.3|44.2|45.1|43.7
281|2021.6.22 15:00|29.3|29.5|29.1|44.1|45|43.6
282|2021.6.22 14:50|29|29.1|28.9|44|44.8|43.5
283|2021.6.22 14:40|28.9|29|28.9|44.5|45.5|44.1
284|2021.6.22 14:30|28.9|28.9|28.8|44.9|45.8|44.3
285|2021.6.22 14:20|28.8|28.9|28.8|43.9|44.8|43.4
286|2021.6.22 14:10|29|29.1|28.9|44.2|45.3|43.9
287|2021.6.22 14:00|29.1|29.2|29|44.9|46.7|44.6
288|2021.6.22 13:50|28.9|29|28.8|44.3|45.4|44.2
289|2021.6.22 13:40|28.9|29|28.8|45.6|47.8|45.1
290|2021.6.22 13:30|28.8|28.9|28.6|45.5|46.6|45.2
291|2021.6.22 13:20|28.6|28.6|28.5|44.6|45.6|44.4
292|2021.6.22 13:10|28.7|28.8|28.6|47|49.6|47
293|2021.6.22 13:00|28.6|28.6|28.5|46.7|48|46
294|2021.6.22 12:50|28.4|28.6|28.1|47.9|48.6|47.2
295|2021.6.22 12:40|27.8|28.1|27.7|48.2|50.3|48.1`;

const newer = `12|2021.6.24 13:00|27.2|27.3|27.1|61.9|62.7|61.5
13|2021.6.24 12:50|26.9|27.2|26.4|63.8|65.2|64
14|2021.6.24 12:40|26.2|26.3|26.1|64.9|65.7|64.8
15|2021.6.24 12:30|26.1|26.2|26.1|65.8|67.5|65.9
16|2021.6.24 12:20|26.3|26.4|26.2|66.3|67|66.1
17|2021.6.24 12:10|25.9|26.1|25.8|65.8|66.7|65.6
18|2021.6.24 12:00|26|26.2|25.9|66.4|67.5|66.2
19|2021.6.24 11:50|26.4|26.6|26.3|65.1|66.5|65.3
20|2021.6.24 11:40|26.1|26.3|25.9|66.1|67.4|66
21|2021.6.24 11:30|26.3|26.4|26.1|66.7|67.6|66
22|2021.6.24 11:20|26.2|26.3|26.1|67.3|68|67
23|2021.6.24 11:10|26.1|26.2|26.1|66.8|68.1|66.9
24|2021.6.24 11:00|26.2|26.3|26.1|67.8|69.8|67.7
25|2021.6.24 10:50|26|26.3|25.4|68.9|70.2|68.8
26|2021.6.24 10:40|25.3|25.5|25.1|70.6|72.3|69.9
27|2021.6.24 10:30|24.8|25.1|24.6|71.6|72.2|71.2
28|2021.6.24 10:20|24.9|25|24.8|71.5|72.7|71.4
29|2021.6.24 10:10|24.8|25|24.6|72.3|72.8|72
30|2021.6.24 10:00|24.3|24.6|24|73.9|74.5|73.4
31|2021.6.24 9:50|23.8|24|23.5|75.4|76.3|75.1
32|2021.6.24 9:40|23.6|23.7|23.5|75.8|76.7|75.6
33|2021.6.24 9:30|23.6|23.7|23.6|76.1|77.1|76.2`;

const cols = '<colgroup><col class="col-head"><col class="col-a">' + '<col>'.repeat(15) + '</colgroup>';
const parse = text => text.split('\n').map(line => line.split('|'));
const blank = n => [String(n)];

function head(selected) {
  const letters = [...'ABCDEFGHIJKLMNOP'];
  return '<thead><tr><th><svg><use href="#corner"/></svg></th>' +
    letters.map(l => `<th scope="col"${l === selected ? ' class="sel"' : ''}>${l}</th>`).join('') +
    '</tr></thead>';
}

function row([num, ...v]) {
  const picked = num === '30' || num === '31';
  let cells;
  if (!v.length) {
    cells = '<td></td>'.repeat(16);
  } else {
    const o = num === '30' ? ' class="pick"' : num === '31' ? ' class="pick-end"' : '';
    cells = v.slice(0, 4).map(x => `<td>${x}</td>`).join('') +
      '<td class="dash">-</td>'.repeat(9) +
      `<td>${v[4]}</td><td${o}>${v[5]}</td><td>${v[6]}</td>`;
  }
  return `<tr><th scope="row"${picked ? ' class="sel"' : ''}>${num}</th>${cells}</tr>`;
}

function fill(id, header, rows) {
  document.getElementById(id).innerHTML = cols + header + '<tbody>' + rows.map(row).join('') + '</tbody>';
}

const range = (a, b) => Array.from({ length: b - a + 1 }, (_, i) => blank(a + i));
fill('sheet-top', head('O'), [...range(1, 11), ...parse(newer)]);
fill('sheet-bottom', head('F'), [...parse(older), ...range(296, 300)]);
fill('sheet-clip', '', parse(older).slice(5, 26));
```
